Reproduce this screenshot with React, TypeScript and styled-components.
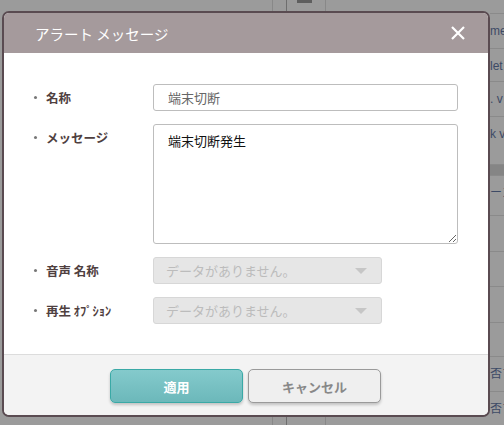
import React from 'react';
import styled, { createGlobalStyle } from 'styled-components';

const GlobalStyle = createGlobalStyle`
  html, body {
    margin: 0;
    padding: 0;
    width: 504px;
    height: 425px;
    overflow: hidden;
    background: #9b9b9b;
    font-family: "Noto Sans CJK JP", "Noto Sans", sans-serif;
  }
`;

const Backdrop = styled.div`
  position: relative;
  width: 504px;
  height: 425px;
  display: flex;
  background: #9b9b9b;
`;

const BackMain = styled.div`
  flex: 1;
  display: flex;
  justify-content: flex-end;
  padding-right: 164px;
`;

const BackCol = styled.div<{ $w: number; $dark?: boolean }>`
  width: ${(p) => p.$w}px;
  border-right: 1px solid ${(p) => (p.$dark ? '#6e6e6e' : '#888')};
`;

const BackBlock = styled.div`
  width: 15px;
  height: 3px;
  margin-left: 10px;
  background: #5e5e5e;
`;

const BackSide = styled.div`
  width: 14px;
  display: flex;
  flex-direction: column;
  padding-top: 13px;
`;

const BackRow = styled.div<{ $h: number; $band?: boolean }>`
  height: ${(p) => p.$h}px;
  border-top: 1px solid #8a8a8a;
  background: ${(p) => (p.$band ? '#858585' : 'transparent')};
  font-family: "Liberation Sans", "Noto Sans CJK JP", sans-serif;
  font-size: 12px;
  line-height: 34px;
  color: #3d4a66;
  white-space: nowrap;
  overflow: hidden;
`;

const Overlay = styled.div`
  position: absolute;
  left: 2px;
  top: 11px;
`;

const Dialog = styled.div`
  width: 484px;
  height: 402px;
  border: 2px solid #5a4b51;
  border-radius: 7px;
  overflow: hidden;
  display: flex;
  flex-direction: column;
  background: #fff;
`;

const Header = styled.div`
  height: 40px;
  flex: none;
  background: #a59a9c;
  display: flex;
  align-items: center;
  justify-content: space-between;
  padding: 0 22px 0 31px;
`;

const Title = styled.h1`
  margin: 0;
  font-size: 14.5px;
  font-weight: normal;
  color: #fff;
`;

const Close = styled.button`
  border: 0;
  background: none;
  padding: 0;
  width: 16px;
  height: 16px;
  display: flex;
  cursor: pointer;
`;

const Body = styled.div`
  flex: 1;
  display: flex;
  flex-direction: column;
  gap: 13px;
  padding: 31px 30px 0 30px;
`;

const Row = styled.div<{ $top?: boolean }>`
  display: flex;
  align-items: ${(p) => (p.$top ? 'flex-start' : 'center')};
`;

const Label = styled.label<{ $top?: boolean }>`
  width: 119px;
  flex: none;
  display: flex;
  align-items: center;
  gap: 9px;
  font-size: 12.5px;
  font-weight: bold;
  color: #4f4040;
  padding-top: ${(p) => (p.$top ? '4px' : '0')};

  &::before {
    content: '';
    width: 3px;
    height: 3px;
    border-radius: 50%;
    background: #777;
  }
`;

const TextInput = styled.input`
  width: 305px;
  height: 27px;
  box-sizing: border-box;
  border: 1px solid #bdbdbd;
  border-radius: 3px;
  padding: 0 14px;
  font-family: inherit;
  font-size: 13px;
  color: #666;
  outline: none;
`;

const TextArea = styled.textarea`
  width: 305px;
  height: 120px;
  box-sizing: border-box;
  border: 1px solid #bdbdbd;
  border-radius: 3px;
  padding: 6px 14px;
  font-family: inherit;
  font-size: 13px;
  color: #111;
  outline: none;
  resize: both;
`;

const Select = styled.div`
  width: 229px;
  height: 27px;
  box-sizing: border-box;
  border: 1px solid #d7d7d7;
  border-radius: 3px;
  background: #e6e6e6;
  display: flex;
  align-items: center;
  justify-content: space-between;
  padding: 0 14px 0 12px;
  font-size: 13px;
  color: #bcbcbc;
`;

const Arrow = styled.span`
  width: 0;
  height: 0;
  border-left: 6px solid transparent;
  border-right: 6px solid transparent;
  border-top: 6px solid #c6c6c6;
`;

const Footer = styled.div`
  height: 61px;
  flex: none;
  background: #f3f3f3;
  border-top: 1px solid #dcdcdc;
  display: flex;
  justify-content: center;
  align-items: flex-start;
  gap: 5px;
  padding-top: 14px;
  padding-right: 1px;
  box-sizing: border-box;
`;

const Button = styled.button<{ $primary?: boolean }>`
  width: 133px;
  height: 34px;
  border-radius: 5px;
  font-family: inherit;
  font-size: 13px;
  font-weight: bold;
  cursor: pointer;
  border: 1px solid ${(p) => (p.$primary ? '#3aa9a6' : '#9a9a9a')};
  background: ${(p) =>
    p.$primary ? 'linear-gradient(#84cacc, #6cb8ba)' : '#efefef'};
  color: ${(p) => (p.$primary ? '#fff' : '#888')};
  box-shadow: 0 2px 3px rgba(0, 0, 0, 0.2);
`;

const rows = [
  { h: 34, text: 'me' },
  { h: 33, text: 'let' },
  { h: 34, text: '. v' },
  { h: 48, text: 'k v' },
  { h: 10, text: '', band: true },
  { h: 40, text: 'ーン' },
  { h: 35, text: '' },
  { h: 35, text: '' },
  { h: 35, text: '' },
  { h: 34, text: '' },
  { h: 34, text: '否ア' },
  { h: 34, text: '否ア' },
];

const App: React.FC = () => {
  return (
    <>
      <GlobalStyle />
      <Backdrop>
        <BackMain>
          <BackCol $w={13} />
          <BackCol $w={13} $dark />
          <BackCol $w={38}>
            <BackBlock />
          </BackCol>
        </BackMain>
        <BackSide>
          {rows.map((r, i) => (
            <BackRow key={i} $h={r.h} $band={r.band}>
              {r.text}
            </BackRow>
          ))}
        </BackSide>
        <Overlay>
          <Dialog>
            <Header>
              <Title>アラート メッセージ</Title>
              <Close aria-label="close">
                <svg width="16" height="16" viewBox="0 0 16 16">
                  <path
                    d="M2 2 L14 14 M14 2 L2 14"
                    stroke="#fff"
                    strokeWidth="2.2"
                  />
                </svg>
              </Close>
            </Header>
            <Body>
              <Row>
                <Label>名称</Label>
                <TextInput defaultValue="端末切断" />
              </Row>
              <Row $top>
                <Label $top>メッセージ</Label>
                <TextArea defaultValue="端末切断発生" />
              </Row>
              <Row>
                <Label>音声 名称</Label>
                <Select>
                  データがありません。
                  <Arrow />
                </Select>
              </Row>
              <Row>
                <Label>再生 ｵﾌﾟｼｮﾝ</Label>
                <Select>
                  データがありません。
                  <Arrow />
                </Select>
              </Row>
            </Body>
            <Footer>
              <Button $primary>適用</Button>
              <Button>キャンセル</Button>
            </Footer>
          </Dialog>
        </Overlay>
      </Backdrop>
    </>
  );
};

export default App;
